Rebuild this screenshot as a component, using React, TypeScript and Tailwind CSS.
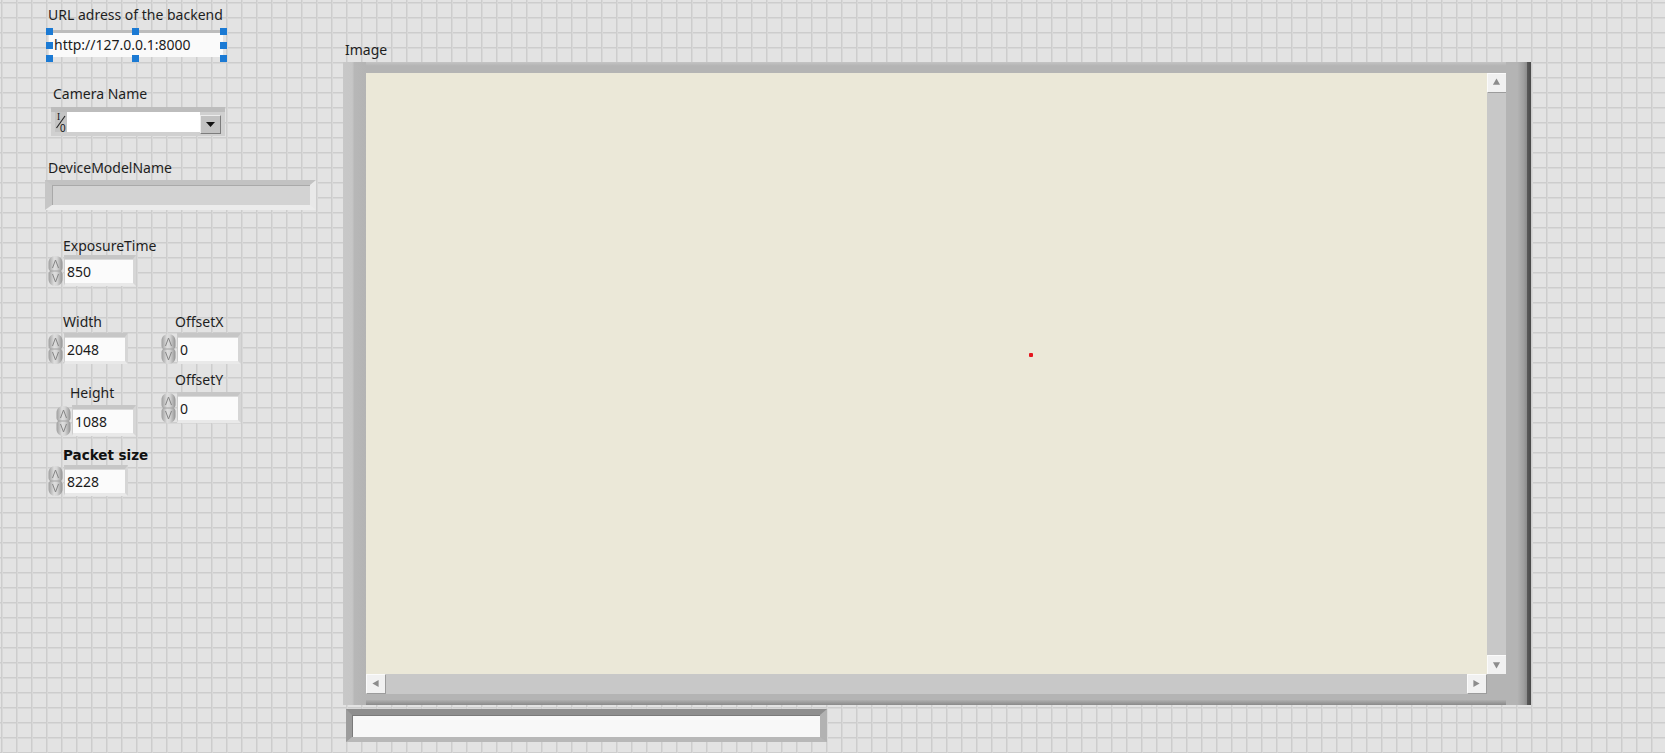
import { useId } from "react";

const Label = ({ children, className = "" }: { children: React.ReactNode; className?: string }) => (
  <div className={`text-[14px] leading-[16px] whitespace-nowrap text-[#1e1e1e] ${className}`}>{children}</div>
);

const Spinner = () => {
  const id = "g" + useId().replace(/[^a-zA-Z0-9]/g, "");
  return (
    <svg width="17" height="32" viewBox="0 0 17 32" className="shrink-0">
      <defs>
        <linearGradient id={id} x1="0" x2="1" y1="0" y2="0">
          <stop offset="0" stopColor="#9e9e9e" />
          <stop offset="0.4" stopColor="#dedede" />
          <stop offset="0.6" stopColor="#d6d6d6" />
          <stop offset="1" stopColor="#939393" />
        </linearGradient>
      </defs>
      <path
        d="M8.5 1 C13 1 15.5 4 15.5 8 L15.5 13 C15.5 14.5 14.5 15.5 14 16 C14.5 16.5 15.5 17.5 15.5 19 L15.5 24 C15.5 28 13 31 8.5 31 C4 31 1.5 28 1.5 24 L1.5 19 C1.5 17.5 2.5 16.5 3 16 C2.5 15.5 1.5 14.5 1.5 13 L1.5 8 C1.5 4 4 1 8.5 1 Z"
        fill={`url(#${id})`}
      />
      <line x1="3" y1="16" x2="14" y2="16" stroke="#a2a2a2" strokeWidth="1" />
      <path d="M5.5 13 L8.5 5 L11.5 13" fill="none" stroke="#858585" strokeWidth="1" strokeLinejoin="round" />
      <path d="M5.5 19 L8.5 27 L11.5 19" fill="none" stroke="#858585" strokeWidth="1" strokeLinejoin="round" />
    </svg>
  );
};

const Numeric = ({ value, box, className = "" }: { value: string; box: string; className?: string }) => (
  <div className={`flex items-start ${className}`}>
    <Spinner />
    <div
      className={`h-[31px] border-t-[4px] border-l-[1px] border-r-[3px] border-b-[3px] border-t-[#c6c6c6] border-l-[#cbcbcb] border-r-[#d6d6d6] border-b-[#e9e9e9] bg-[#fbfbfb] shadow-[inset_0_1px_0_#dadada] ${box}`}
    >
      <div className="pl-[2px] pt-[2px] text-[14px] leading-[22px] text-[#1a1a1a]">{value}</div>
    </div>
  </div>
);

const Handle = ({ className }: { className: string }) => (
  <div className={`absolute w-[7px] h-[7px] bg-[#1b7ad4] ${className}`} />
);

const ScrollBtn = ({ dir }: { dir: "up" | "down" | "left" | "right" }) => {
  const pts = {
    up: "5.5,12 9.5,5 13.5,12",
    down: "5.5,7 9.5,14 13.5,7",
    left: "13,5.5 6,9.5 13,13.5",
    right: "6,5.5 13,9.5 6,13.5",
  }[dir];
  return (
    <div className="w-[19px] h-[19px] bg-[#f1f1f1] border-t border-l border-t-[#fbfbfb] border-l-[#fbfbfb] shadow-[1px_1px_0_#9c9c9c]">
      <svg width="17" height="17" viewBox="0 0 19 19">
        <polygon points={pts} fill="#8c8c8c" />
      </svg>
    </div>
  );
};

export default function App() {
  return (
    <div className="w-[1665px] h-[753px] overflow-hidden flex bg-[#e3e3e3] bg-[linear-gradient(to_right,#cdcdcd_1px,#d8d8d8_1px,#d8d8d8_2px,transparent_2px),linear-gradient(to_bottom,#cdcdcd_1px,#d8d8d8_1px,#d8d8d8_2px,transparent_2px)] bg-[size:15px_15px] bg-[position:1px_2px] font-['Noto_Sans',sans-serif]">
      {/* left controls */}
      <div className="w-[343px] shrink-0 flex flex-col items-start">
        <Label className="mt-[7px] ml-[48px]">URL adress of the backend</Label>
        <div className="relative mt-[7px] ml-[49px] w-[174px] h-[27px] border-t-[3px] border-t-[#bcbcbc] bg-[#fafafa]">
          <div className="pl-[5px] text-[14px] leading-[24px] text-[#1a1a1a]">http://127.0.0.1:8000</div>
          <Handle className="-left-[3px] -top-[5px]" />
          <Handle className="left-[83px] -top-[5px]" />
          <Handle className="left-[171px] -top-[5px]" />
          <Handle className="-left-[3px] top-[9px]" />
          <Handle className="left-[171px] top-[9px]" />
          <Handle className="-left-[3px] top-[22px]" />
          <Handle className="left-[83px] top-[22px]" />
          <Handle className="left-[171px] top-[22px]" />
        </div>

        <Label className="mt-[29px] ml-[53px]">Camera Name</Label>
        <div className="mt-[5px] ml-[51px] w-[174px] h-[29px] flex items-start px-[4px] bg-[#d0d0d0] border-t-[5px] border-t-[#bdbdbd]">
          <div className="w-[12px] h-[20px] bg-[#c4c4c4]">
            <svg width="12" height="20" viewBox="0 0 12 20">
              <text x="2" y="8" fontSize="9.5" fontFamily="Liberation Serif, serif" fill="#111">I</text>
              <line x1="1.5" y1="16" x2="10" y2="4" stroke="#222" strokeWidth="1.1" />
              <text x="5" y="19.5" fontSize="10" fontFamily="Liberation Sans, sans-serif" fill="#111">0</text>
            </svg>
          </div>
          <div className="w-[133px] h-[20px] bg-white" />
          <div className="mt-[3px] w-[21px] h-[19px] flex items-center justify-center bg-[#c2c2c2] border-t border-l border-t-[#ececec] border-l-[#ececec] border-r border-b border-r-[#7c7c7c] border-b-[#7c7c7c]">
            <svg width="9" height="5" viewBox="0 0 9 5">
              <polygon points="0,0 9,0 4.5,5" fill="#111" />
            </svg>
          </div>
        </div>

        <Label className="mt-[24px] ml-[48px]">DeviceModelName</Label>
        <div className="mt-[4px] ml-[45px] w-[271px] h-[30px] border-t-[5px] border-l-[7px] border-r-[6px] border-b-[5px] border-t-[#c2c2c2] border-l-[#c6c6c6] border-r-[#e9e9e9] border-b-[#ececec] bg-[#d3d3d3] shadow-[inset_1px_1px_0_#a9a9a9]" />

        <Label className="mt-[28px] ml-[63px]">ExposureTime</Label>
        <Numeric className="mt-[1px] ml-[47px]" box="w-[72px]" value="850" />

        <div className="mt-[27px] flex">
          <div className="w-[160px] flex flex-col items-start">
            <Label className="ml-[63px]">Width</Label>
            <Numeric className="mt-[3px] ml-[47px]" box="w-[64px]" value="2048" />
            <Label className="mt-[20px] ml-[70px]">Height</Label>
            <Numeric className="mt-[4px] ml-[55px]" box="w-[64px]" value="1088" />
          </div>
          <div className="flex flex-col items-start">
            <Label className="ml-[15px]">OffsetX</Label>
            <Numeric className="mt-[3px]" box="w-[64px]" value="0" />
            <Label className="mt-[7px] ml-[15px]">OffsetY</Label>
            <Numeric className="mt-[4px]" box="w-[64px]" value="0" />
          </div>
        </div>

        <div className="mt-[10px] ml-[63px] text-[13.5px] leading-[16px] font-bold font-['DejaVu_Sans',sans-serif] text-[#111]">Packet size</div>
        <Numeric className="mt-[2px] ml-[47px]" box="w-[64px]" value="8228" />
      </div>

      {/* image display */}
      <div className="flex flex-col items-start">
        <Label className="mt-[42px] ml-[2px]">Image</Label>
        <div className="mt-[4px] w-[1188px] h-[643px] flex bg-[#b4b4b4]">
          <div className="w-[23px] bg-[linear-gradient(to_right,#c8c8c8,#c6c6c6_40%,#b7b7b7_50%,#b4b4b4)]" />
          <div className="w-[1140px] flex flex-col">
            <div className="h-[11px] bg-[linear-gradient(to_bottom,#c4c4c4,#b4b4b4_35%)]" />
            <div className="flex-1 grid grid-cols-[1121px_19px] grid-rows-[601px_20px]">
              <div className="relative bg-[#ebe8d8]">
                <div className="absolute left-[663px] top-[280px] w-[4px] h-[4px] rounded-[1px] bg-[#e5161e]" />
              </div>
              <div className="flex flex-col justify-between bg-[#c8c8c8]">
                <ScrollBtn dir="up" />
                <ScrollBtn dir="down" />
              </div>
              <div className="flex justify-between bg-[#c8c8c8] pr-[1px]">
                <ScrollBtn dir="left" />
                <ScrollBtn dir="right" />
              </div>
              <div className="bg-[#b4b4b4]" />
            </div>
            <div className="h-[11px] bg-[linear-gradient(to_bottom,#b4b4b4,#b4b4b4_50%,#a2a2a2_70%,#8a8a8a)]" />
          </div>
          <div className="w-[25px] bg-[linear-gradient(to_right,#b4b4b4,#b4b4b4_45%,#a0a0a0_70%,#8c8c8c_84%,#585858_86%,#4a4a4a)]" />
        </div>
        <div className="mt-[4px] ml-[3px] w-[481px] h-[33px] border-t-[6px] border-l-[6px] border-r-[7px] border-b-[5px] border-t-[#8e8e8e] border-l-[#9c9c9c] border-r-[#b2b2b2] border-b-[#b8b8b8] bg-[#f8f8f8] shadow-[inset_1px_1px_0_#7a7a7a]" />
      </div>
    </div>
  );
}
